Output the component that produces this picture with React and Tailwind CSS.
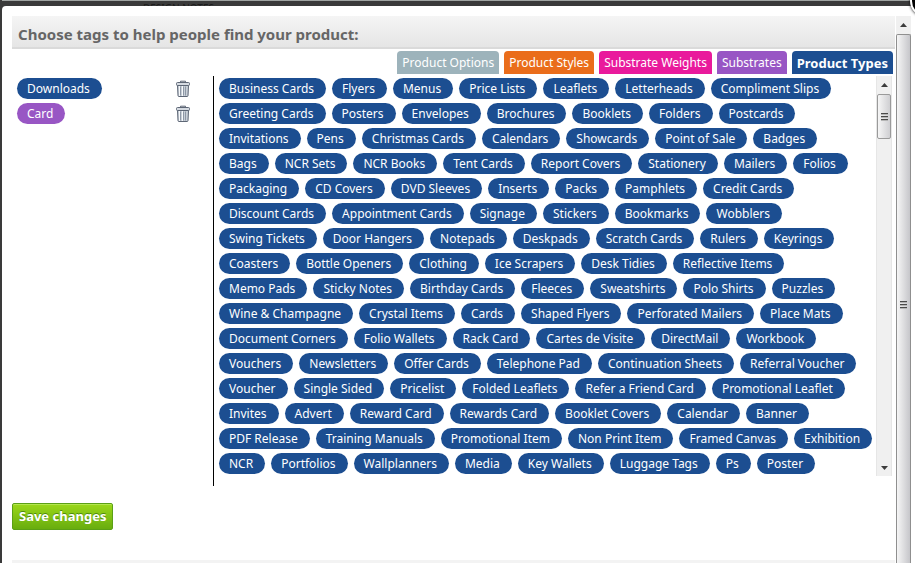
import { useState } from 'react';

const TABS = [
  { name: 'Product Options', className: 'bg-[#9db3bb]' },
  { name: 'Product Styles', className: 'bg-[#ea6d1b]' },
  { name: 'Substrate Weights', className: 'bg-[#e91a9c]' },
  { name: 'Substrates', className: 'bg-[#9856c4]' },
  { name: 'Product Types', className: 'bg-[#1c4e91]' },
];

const TAG_ROWS = [
  ['Business Cards', 'Flyers', 'Menus', 'Price Lists', 'Leaflets', 'Letterheads', 'Compliment Slips'],
  ['Greeting Cards', 'Posters', 'Envelopes', 'Brochures', 'Booklets', 'Folders', 'Postcards'],
  ['Invitations', 'Pens', 'Christmas Cards', 'Calendars', 'Showcards', 'Point of Sale', 'Badges'],
  ['Bags', 'NCR Sets', 'NCR Books', 'Tent Cards', 'Report Covers', 'Stationery', 'Mailers', 'Folios'],
  ['Packaging', 'CD Covers', 'DVD Sleeves', 'Inserts', 'Packs', 'Pamphlets', 'Credit Cards'],
  ['Discount Cards', 'Appointment Cards', 'Signage', 'Stickers', 'Bookmarks', 'Wobblers'],
  ['Swing Tickets', 'Door Hangers', 'Notepads', 'Deskpads', 'Scratch Cards', 'Rulers', 'Keyrings'],
  ['Coasters', 'Bottle Openers', 'Clothing', 'Ice Scrapers', 'Desk Tidies', 'Reflective Items'],
  ['Memo Pads', 'Sticky Notes', 'Birthday Cards', 'Fleeces', 'Sweatshirts', 'Polo Shirts', 'Puzzles'],
  ['Wine & Champagne', 'Crystal Items', 'Cards', 'Shaped Flyers', 'Perforated Mailers', 'Place Mats'],
  ['Document Corners', 'Folio Wallets', 'Rack Card', 'Cartes de Visite', 'DirectMail', 'Workbook'],
  ['Vouchers', 'Newsletters', 'Offer Cards', 'Telephone Pad', 'Continuation Sheets', 'Referral Voucher'],
  ['Voucher', 'Single Sided', 'Pricelist', 'Folded Leaflets', 'Refer a Friend Card', 'Promotional Leaflet'],
  ['Invites', 'Advert', 'Reward Card', 'Rewards Card', 'Booklet Covers', 'Calendar', 'Banner'],
  ['PDF Release', 'Training Manuals', 'Promotional Item', 'Non Print Item', 'Framed Canvas', 'Exhibition'],
  ['NCR', 'Portfolios', 'Wallplanners', 'Media', 'Key Wallets', 'Luggage Tags', 'Ps', 'Poster'],
];

function TrashIcon() {
  return (
    <svg width="14" height="17" viewBox="0 0 14 17" aria-hidden="true">
      <path d="M4.5 2.5V1.2h5v1.3" fill="none" stroke="#5d6675" />
      <path d="M1.5 5.5h11l-.5 10.2q-.1.8-.9.8H2.9q-.8 0-.9-.8z" fill="#c9d0d8" stroke="#5d6675" />
      <path d="M3.5 6v10M6.5 6v10" stroke="#f7f9fb" />
      <path d="M4.5 6.5v9M7.5 6.5v9M9.5 6.5v9" stroke="#8e98a6" />
      <rect x=".5" y="2.5" width="13" height="3" rx="1" fill="#d5dae1" stroke="#5d6675" />
    </svg>
  );
}

function Grip() {
  return (
    <span className="flex flex-col gap-px">
      <span className="h-0.5 w-[7px] border-t border-[#4a4a4a] bg-[#b5b5b5]" />
      <span className="h-0.5 w-[7px] border-t border-[#4a4a4a] bg-[#b5b5b5]" />
      <span className="h-0.5 w-[7px] border-t border-[#4a4a4a] bg-[#b5b5b5]" />
    </span>
  );
}

function Arrow({ down }) {
  return (
    <svg width="7" height="4" viewBox="0 0 7 4" className={down ? 'rotate-180' : ''} aria-hidden="true">
      <path d="M3.5 0L7 4H0z" fill="#3c3c3c" />
    </svg>
  );
}

function Tag({ name, className = 'bg-[#1c4e91]' }) {
  return (
    <button type="button" className={`h-[21px] rounded-full pl-[10px] pr-3 text-xs leading-5 whitespace-nowrap text-white ${className}`}>
      {name}
    </button>
  );
}

export default function App() {
  const [activeTab, setActiveTab] = useState('Product Types');
  const [selected, setSelected] = useState([
    { name: 'Downloads', className: 'bg-[#1c4e91]' },
    { name: 'Card', className: 'bg-[#9856c4]' },
  ]);

  const removeTag = (name) => {
    setSelected((prev) => prev.filter((tag) => tag.name !== name));
  };

  return (
    <div className="relative flex h-screen flex-col overflow-hidden bg-[#3a3a3a] pl-0.5 font-['Noto_Sans',sans-serif]">
      {/* page behind the dialog */}
      <div className="h-1.5 shrink-0 border-t border-[#a0a4a2] pl-[141px]">
        <p className="pt-px text-[10px] leading-3 whitespace-nowrap text-[#1c1c1c]">DESIGN NOTES</p>
      </div>

      <div className="relative flex min-h-0 flex-1 rounded-tl bg-white pt-[10px] pr-1 pl-[10px]">
        <main className="flex min-w-0 flex-1 flex-col">
          <h1 className="h-[33px] shrink-0 border-b-2 border-[#dadada] bg-linear-to-b from-[#f5f5f5] to-[#e5e5e5] pl-1.5 text-[15px] leading-9 font-bold text-[#666]">
            Choose tags to help people find your product:
          </h1>

          <div role="tablist" className="flex justify-end gap-[5px] pt-0.5 pr-0.5">
            {TABS.map((tab) => (
              <button
                key={tab.name}
                type="button"
                role="tab"
                aria-selected={tab.name === activeTab}
                onClick={() => setActiveTab(tab.name)}
                className={`h-[23px] rounded-t px-[5px] leading-5 whitespace-nowrap text-white ${tab.className} ${tab.name === activeTab ? 'text-[13px] font-bold' : 'text-xs'}`}
              >
                {tab.name}
              </button>
            ))}
          </div>

          <div className="mt-0.5 flex h-[410px] shrink-0">
            <ul className="flex w-[202px] shrink-0 flex-col gap-1 border-r border-black pt-0.5 pr-[23px] pl-[5px]">
              {selected.map((tag) => (
                <li key={tag.name} className="flex h-[21px] items-center justify-between">
                  <Tag name={tag.name} className={tag.className} />
                  <button type="button" aria-label={`Remove ${tag.name}`} onClick={() => removeTag(tag.name)}>
                    <TrashIcon />
                  </button>
                </li>
              ))}
            </ul>

            <div className="flex h-[400px] min-w-0 flex-1 pr-[3px]">
              <div className="flex min-w-0 flex-1 flex-col gap-1 overflow-hidden pt-0.5 pl-[5px]">
                {TAG_ROWS.map((row) => (
                  <div key={row[0]} className="flex gap-1.5">
                    {row.map((name) => (
                      <Tag key={name} name={name} />
                    ))}
                  </div>
                ))}
              </div>
              <div className="flex w-4 shrink-0 flex-col items-center border-x border-[#e6e6e6] bg-[#f0f0f0]">
                <span className="flex h-[18px] items-center"><Arrow /></span>
                <span className="flex h-[45px] w-full items-center justify-center rounded-xs border border-[#9a9a9a] bg-linear-to-r from-[#f6f6f6] to-[#cfcfd2]">
                  <Grip />
                </span>
                <span className="mt-auto flex h-4 items-center"><Arrow down /></span>
              </div>
            </div>
          </div>

          <div className="mt-[17px]">
            <button
              type="button"
              className="h-[27px] rounded-xs border border-[#5ba016] bg-linear-to-b from-[#9bd81a] to-[#68ad0e] px-1.5 pb-0.5 text-[13px] leading-6 font-bold whitespace-nowrap text-white shadow-[inset_0_1px_0_#b4e64f] [text-shadow:0_-1px_0_#4d8a0c]"
            >
              Save changes
            </button>
          </div>
          <div className="mt-auto h-[3px] bg-[#f3f3f3]" />
        </main>

        <div className="ml-px flex w-[15px] shrink-0 flex-col items-center bg-[#f0f0f0]">
          <span className="flex h-[18px] items-center"><Arrow /></span>
          <span className="flex w-full flex-1 items-center justify-center rounded-t-xs border border-b-0 border-[#8f8f8f] bg-linear-to-r from-[#f6f6f6] to-[#c6c6ca] pt-3">
            <Grip />
          </span>
        </div>
      </div>

      <button type="button" aria-label="Close" className="absolute -top-[15px] -right-[27px] size-8 rounded-full border-2 border-white bg-black shadow-[0_0_3px_#000]" />
    </div>
  );
}
